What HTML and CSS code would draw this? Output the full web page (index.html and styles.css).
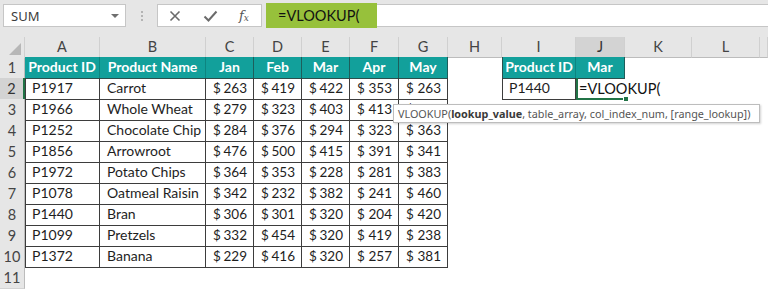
FILE: index.html
```html
<!DOCTYPE html>
<html>
<head>
<meta charset="utf-8">
<link rel="stylesheet" href="styles.css">
</head>
<body>
<div class="app">
  <div class="toolbar">
    <div class="namebox"><span class="name">SUM</span><span class="caret"></span></div>
    <div class="grip"><i></i><i></i><i></i></div>
    <div class="fxbox">
      <svg class="ico-x" width="12" height="12" viewBox="0 0 12 12"><path d="M1.5 1.5 L10.5 10.5 M10.5 1.5 L1.5 10.5" stroke="#6b6b6b" stroke-width="1.6" fill="none"/></svg>
      <svg class="ico-check" width="15" height="12" viewBox="0 0 15 12"><path d="M1.5 6.5 L5.5 10.5 L13.5 1.5" stroke="#6b6b6b" stroke-width="2" fill="none"/></svg>
      <span class="fx">f<sub>x</sub></span>
    </div>
    <div class="formula"><span class="hl">=VLOOKUP(</span></div>
  </div>

  <div class="sheet">
    <div class="row colhdr">
      <div class="corner"><span class="tri"></span></div>
      <div class="ch">A</div><div class="ch">B</div><div class="ch">C</div><div class="ch">D</div><div class="ch">E</div><div class="ch">F</div><div class="ch">G</div><div class="ch">H</div><div class="ch">I</div><div class="ch sel">J</div><div class="ch">K</div><div class="ch">L</div><div class="ch"></div>
    </div>

    <div class="row">
      <div class="rh">1</div>
      <div class="th">Product ID</div><div class="th">Product Name</div><div class="th sep">Jan</div><div class="th sep">Feb</div><div class="th sep">Mar</div><div class="th sep">Apr</div><div class="th sep">May</div>
      <div class="c"></div>
      <div class="th left">Product ID</div><div class="th sep">Mar</div>
      <div class="c"></div><div class="c"></div><div class="c"></div>
    </div>

    <div class="row">
      <div class="rh rsel">2</div>
      <div class="td first">P1917</div><div class="td">Carrot</div>
      <div class="td num"><span>$</span><span>263</span></div><div class="td num"><span>$</span><span>419</span></div><div class="td num"><span>$</span><span>422</span></div><div class="td num"><span>$</span><span>353</span></div><div class="td num"><span>$</span><span>263</span></div>
      <div class="c"></div>
      <div class="td first">P1440</div>
      <div class="edit"><span class="etext">=VLOOKUP(</span><span class="cursor"></span><span class="handle"></span></div>
      <div class="c"></div><div class="c"></div><div class="c"></div>
    </div>

    <div class="row">
      <div class="rh">3</div>
      <div class="td first">P1966</div><div class="td">Whole Wheat</div>
      <div class="td num"><span>$</span><span>279</span></div><div class="td num"><span>$</span><span>323</span></div><div class="td num"><span>$</span><span>403</span></div><div class="td num"><span>$</span><span>413</span></div><div class="td num"><span>$</span><span>236</span></div>
      <div class="c"></div><div class="c"></div><div class="c"></div><div class="c"></div><div class="c"></div><div class="c"></div>
    </div>

    <div class="row">
      <div class="rh">4</div>
      <div class="td first">P1252</div><div class="td">Chocolate Chip</div>
      <div class="td num"><span>$</span><span>284</span></div><div class="td num"><span>$</span><span>376</span></div><div class="td num"><span>$</span><span>294</span></div><div class="td num"><span>$</span><span>323</span></div><div class="td num"><span>$</span><span>363</span></div>
      <div class="c"></div><div class="c"></div><div class="c"></div><div class="c"></div><div class="c"></div><div class="c"></div>
    </div>

    <div class="row">
      <div class="rh">5</div>
      <div class="td first">P1856</div><div class="td">Arrowroot</div>
      <div class="td num"><span>$</span><span>476</span></div><div class="td num"><span>$</span><span>500</span></div><div class="td num"><span>$</span><span>415</span></div><div class="td num"><span>$</span><span>391</span></div><div class="td num"><span>$</span><span>341</span></div>
      <div class="c"></div><div class="c"></div><div class="c"></div><div class="c"></div><div class="c"></div><div class="c"></div>
    </div>

    <div class="row">
      <div class="rh">6</div>
      <div class="td first">P1972</div><div class="td">Potato Chips</div>
      <div class="td num"><span>$</span><span>364</span></div><div class="td num"><span>$</span><span>353</span></div><div class="td num"><span>$</span><span>228</span></div><div class="td num"><span>$</span><span>281</span></div><div class="td num"><span>$</span><span>383</span></div>
      <div class="c"></div><div class="c"></div><div class="c"></div><div class="c"></div><div class="c"></div><div class="c"></div>
    </div>

    <div class="row">
      <div class="rh">7</div>
      <div class="td first">P1078</div><div class="td">Oatmeal Raisin</div>
      <div class="td num"><span>$</span><span>342</span></div><div class="td num"><span>$</span><span>232</span></div><div class="td num"><span>$</span><span>382</span></div><div class="td num"><span>$</span><span>241</span></div><div class="td num"><span>$</span><span>460</span></div>
      <div class="c"></div><div class="c"></div><div class="c"></div><div class="c"></div><div class="c"></div><div class="c"></div>
    </div>

    <div class="row">
      <div class="rh">8</div>
      <div class="td first">P1440</div><div class="td">Bran</div>
      <div class="td num"><span>$</span><span>306</span></div><div class="td num"><span>$</span><span>301</span></div><div class="td num"><span>$</span><span>320</span></div><div class="td num"><span>$</span><span>204</span></div><div class="td num"><span>$</span><span>420</span></div>
      <div class="c"></div><div class="c"></div><div class="c"></div><div class="c"></div><div class="c"></div><div class="c"></div>
    </div>

    <div class="row">
      <div class="rh">9</div>
      <div class="td first">P1099</div><div class="td">Pretzels</div>
      <div class="td num"><span>$</span><span>332</span></div><div class="td num"><span>$</span><span>454</span></div><div class="td num"><span>$</span><span>320</span></div><div class="td num"><span>$</span><span>419</span></div><div class="td num"><span>$</span><span>238</span></div>
      <div class="c"></div><div class="c"></div><div class="c"></div><div class="c"></div><div class="c"></div><div class="c"></div>
    </div>

    <div class="row">
      <div class="rh">10</div>
      <div class="td first">P1372</div><div class="td">Banana</div>
      <div class="td num"><span>$</span><span>229</span></div><div class="td num"><span>$</span><span>416</span></div><div class="td num"><span>$</span><span>320</span></div><div class="td num"><span>$</span><span>257</span></div><div class="td num"><span>$</span><span>381</span></div>
      <div class="c"></div><div class="c"></div><div class="c"></div><div class="c"></div><div class="c"></div><div class="c"></div>
    </div>

    <div class="row">
      <div class="rh">11</div>
      <div class="c"></div><div class="c"></div><div class="c"></div><div class="c"></div><div class="c"></div><div class="c"></div><div class="c"></div><div class="c"></div><div class="c"></div><div class="c"></div><div class="c"></div><div class="c"></div><div class="c"></div>
    </div>
  </div>

  <div class="tooltip">VLOOKUP(<b>lookup_value</b>, table_array, col_index_num, [range_lookup])</div>
</div>
</body>
</html>
```

FILE: styles.css
```css
* { box-sizing: border-box; }
html, body { margin: 0; padding: 0; }
body {
  width: 768px;
  height: 292px;
  overflow: hidden;
  background: #ffffff;
  font-family: "Lato", "Liberation Sans", sans-serif;
}
.app { position: relative; width: 768px; height: 292px; }

/* ---------- formula bar ---------- */
.toolbar {
  height: 37px;
  background: #e6e6e6;
  display: flex;
  align-items: flex-start;
  padding-top: 4px;
}
.namebox {
  margin-left: 3px;
  width: 123px;
  height: 23px;
  background: #fff;
  border: 1px solid #c6c6c6;
  display: flex;
  align-items: center;
  justify-content: space-between;
  padding: 0 6px 0 7px;
}
.name {
  font-family: "Noto Sans", "Open Sans", sans-serif;
  font-size: 13px;
  color: #3c3c3c;
}
.caret {
  width: 0; height: 0;
  border-left: 4px solid transparent;
  border-right: 4px solid transparent;
  border-top: 4px solid #6f6f6f;
}
.grip {
  width: 31px;
  height: 23px;
  display: flex;
  flex-direction: column;
  align-items: center;
  justify-content: center;
  gap: 2px;
}
.grip i { display: block; width: 2px; height: 2px; background: #b4b4b4; }
.fxbox {
  width: 105px;
  height: 23px;
  background: #fff;
  border: 1px solid #c6c6c6;
  display: flex;
  align-items: center;
  padding-left: 11px;
}
.ico-x { margin-right: 22px; }
.ico-check { margin-right: 21px; }
.fx {
  font-family: "DejaVu Serif", "Liberation Serif", serif;
  font-style: italic;
  font-size: 13px;
  color: #555;
}
.fx sub { font-size: 9px; vertical-align: -1px; }
.formula {
  margin-left: 4px;
  flex: 1;
  height: 23px;
  background: #fff;
  border-top: 1px solid #c6c6c6;
  border-bottom: 1px solid #c6c6c6;
  display: flex;
}
.hl {
  width: 111px;
  margin-top: -2px;
  height: 25px;
  background: #97c13b;
  color: #111;
  font-size: 14.5px;
  padding-left: 12px;
  display: flex;
  align-items: center;
}

/* ---------- sheet ---------- */
.row {
  display: grid;
  grid-template-columns: 25px 75px 106px 48px 48px 48px 49px 49px 54px 74px 49px 67px 68px 1fr;
  height: 21px;
  font-size: 14px;
}
.colhdr { height: 20px; background: #e6e6e6; }
.corner {
  background: #e6e6e6;
  border-right: 1px solid #d0d0d0;
  position: relative;
}
.tri {
  position: absolute;
  right: 3px; bottom: 3px;
  width: 0; height: 0;
  border-left: 12px solid transparent;
  border-bottom: 12px solid #b7b7b7;
}
.ch {
  border-right: 1px solid #d0d0d0;
  border-bottom: 1px solid #bcbcbc;
  color: #444;
  text-align: center;
  line-height: 20px;
  font-size: 14.5px;
}
.ch.sel { background: #d3d3d3; color: #333; }
.rh {
  background: #e6e6e6;
  border-right: 1px solid #bcbcbc;
  border-bottom: 1px solid #d3d3d3;
  color: #444;
  text-align: center;
  line-height: 21px;
  font-size: 14.5px;
}
.rh.rsel { background: #d3d3d3; border-right: 2px solid #217346; color: #333; }
.th {
  background: #12a09b;
  color: #fff;
  font-weight: 700;
  text-align: center;
  line-height: 20px;
  white-space: nowrap;
  overflow: hidden;
  border-right: 1px solid #0d8580;
  border-bottom: 1px solid #2e4f4d;
}
.th.sep { border-right: 1px solid #1d5e5b; }
.th.left { border-left: 1px solid #2e4f4d; }
.td {
  color: #1e1e1e;
  border-right: 1px solid #3d3d3d;
  border-bottom: 1px solid #3d3d3d;
  padding-left: 7px;
  line-height: 20px;
  white-space: nowrap;
  overflow: hidden;
}
.td.first { border-left: 1px solid #3d3d3d; padding-left: 6px; }
.td.num {
  display: flex;
  justify-content: space-between;
  padding: 0 6px 0 7px;
  font-size: 13.5px;
}
.edit {
  position: relative;
  border-left: 2px solid #217346;
  border-bottom: 2px solid #217346;
  white-space: nowrap;
  line-height: 19px;
  color: #111;
  padding-left: 1px;
  display: flex;
  align-items: center;
}
.etext { font-size: 14.5px; }
.cursor {
  display: inline-block;
  width: 1px;
  height: 15px;
  background: #111;
  margin-left: 1px;
}
.handle {
  position: absolute;
  right: -4px;
  bottom: -4px;
  width: 6px;
  height: 6px;
  background: #217346;
  border: 1px solid #fff;
}

/* ---------- tooltip ---------- */
.tooltip {
  position: absolute;
  left: 393px;
  top: 104px;
  width: 367px;
  height: 19px;
  background: #fff;
  border: 1px solid #bdbdbd;
  box-shadow: 1px 1px 2px rgba(0,0,0,0.18);
  font-family: "Noto Sans", "Open Sans", sans-serif;
  font-size: 10.8px;
  line-height: 17px;
  color: #555;
  padding-left: 4px;
  white-space: nowrap;
}
.tooltip b { color: #3a3a3a; }
```
